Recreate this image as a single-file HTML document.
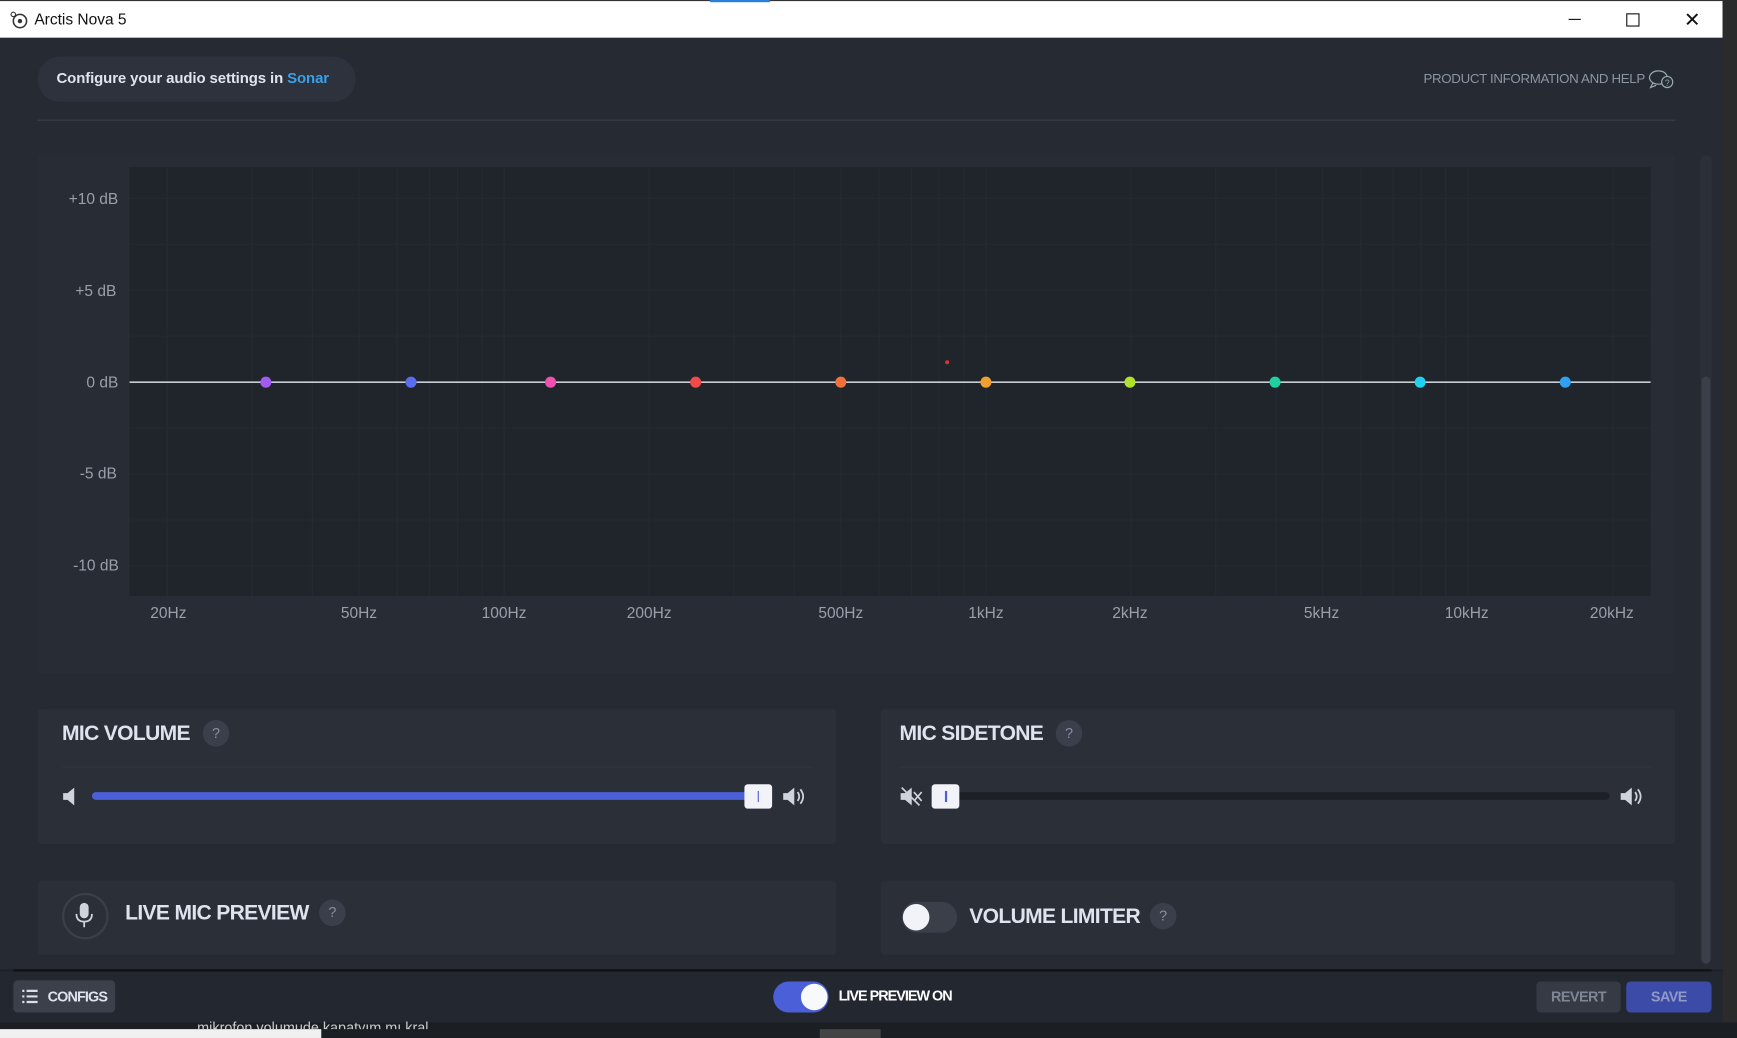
<!DOCTYPE html>
<html><head><meta charset="utf-8"><style>
html,body{margin:0;padding:0;width:1737px;height:1038px;overflow:hidden;background:#1f2227;font-family:"Liberation Sans",sans-serif}
#w{position:absolute;left:0;top:0;width:1568px;height:937px;transform:scale(1.10778);transform-origin:0 0;background:#1f2227}
.a{position:absolute}
.card{position:absolute;background:#2a2f38;border-radius:4px}
.t{position:absolute;color:#dfe3ee;font-size:19px;font-weight:bold;letter-spacing:-0.6px;white-space:nowrap}
.q{position:absolute;width:24px;height:24px;border-radius:12px;background:#3a3f4b;color:#8a8f9b;font-size:13px;text-align:center;line-height:24px}
.lbl{position:absolute;color:#9aa0aa;font-size:14px;white-space:nowrap}
</style></head><body><div id="w">
<div class="a" style="left:0;top:0;width:1555px;height:34px;background:#fff;border-top:1px solid #333"></div>
<div class="a" style="left:641px;top:0;width:54px;height:2px;background:#2a7fd6"></div>
<svg class="a" style="left:8px;top:9px" width="18" height="18" viewBox="0 0 18 18"><circle cx="10" cy="10" r="6" fill="none" stroke="#333" stroke-width="1.4"/><circle cx="10" cy="10" r="2" fill="#333"/><circle cx="4" cy="4" r="2" fill="none" stroke="#333"/></svg>
<div class="a" style="left:31px;top:9px;font-size:14px;color:#111">Arctis Nova 5</div>
<div class="a" style="left:1416px;top:17px;width:11px;height:1px;background:#111"></div>
<div class="a" style="left:1468px;top:12px;width:10px;height:10px;border:1px solid #111"></div>
<div class="a" style="left:1520px;top:8px;font-size:18px;color:#111">✕</div>
<div class="a" style="left:0;top:34px;width:1555px;height:841px;background:#252a33"></div>
<div class="a" style="left:1555px;top:0;width:13px;height:937px;background:#2b2b2b"></div>
<div class="a" style="left:34px;top:51px;width:287px;height:41px;border-radius:21px;background:#2d323c"></div>
<div class="a" style="left:51px;top:63px;font-size:13.5px;font-weight:bold;color:#dfe4ef;letter-spacing:-0.1px">Configure your audio settings in <span style="color:#3aa0e8">Sonar</span></div>
<div class="a" style="left:1285px;top:64px;font-size:12px;color:#8d95a3;letter-spacing:-0.3px">PRODUCT INFORMATION AND HELP</div>
<svg class="a" style="left:1488px;top:61px" width="26" height="22" viewBox="0 0 26 22"><path d="M9 3a8 6 0 1 0 0.1 0M4 14l-2 4 5-2" fill="none" stroke="#9aa" stroke-width="1.1"/><circle cx="17" cy="13" r="5" fill="#252a33" stroke="#9aa" stroke-width="1.1"/><text x="17" y="16.5" font-size="8" fill="#9aa" text-anchor="middle" font-family="Liberation Sans">?</text></svg>
<div class="a" style="left:34px;top:108px;width:1478px;height:1px;background:#3a404a"></div>
<div class="card" style="left:34px;top:140px;width:1478px;height:468px;background:#272c35"></div>
<svg class="a" id="eq" style="left:0;top:0" width="1568" height="620"></svg>
<div class="lbl" style="left:62px;top:171px">+10 dB</div>
<div class="lbl" style="left:68px;top:254px">+5 dB</div>
<div class="lbl" style="left:78px;top:337px">0 dB</div>
<div class="lbl" style="left:72px;top:419px">-5 dB</div>
<div class="lbl" style="left:66px;top:502px">-10 dB</div>
<div id="fl"></div>
<div class="card" style="left:34px;top:640px;width:721px;height:122px"></div>
<div class="t" style="left:56px;top:652px">MIC VOLUME</div><div class="q" style="left:183px;top:650px">?</div>
<div class="a" style="left:56px;top:692px;width:678px;height:1px;background:#30353f"></div>
<svg class="a" style="left:56px;top:710px" width="20" height="18" viewBox="0 0 20 18"><path d="M1 6h4l6-5v16l-6-5H1z" fill="#cfd3dc"/></svg>
<div class="a" style="left:83px;top:715px;width:600px;height:7px;border-radius:4px;background:#4b5fd8"></div>
<div class="a" style="left:672px;top:708px;width:25px;height:22px;border-radius:3px;background:#f1f3f8"><div style="position:absolute;left:12px;top:6px;width:1px;height:10px;background:#4b5fd8"></div></div>
<svg class="a" style="left:706px;top:710px" width="22" height="18" viewBox="0 0 22 18"><path d="M1 6h4l6-5v16l-6-5H1z" fill="#cfd3dc"/><path d="M14 5q3 4 0 8M16.5 2.5q5 6.5 0 13" fill="none" stroke="#cfd3dc" stroke-width="1.6"/></svg>
<div class="card" style="left:795px;top:640px;width:717px;height:122px"></div>
<div class="t" style="left:812px;top:652px">MIC SIDETONE</div><div class="q" style="left:953px;top:650px">?</div>
<div class="a" style="left:812px;top:692px;width:678px;height:1px;background:#30353f"></div>
<svg class="a" style="left:812px;top:710px" width="22" height="18" viewBox="0 0 22 18"><path d="M1 6h4l6-5v16l-6-5H1z" fill="#cfd3dc"/><path d="M13 5l7 8M20 5l-7 8M2 1l16 16" stroke="#cfd3dc" stroke-width="1.5"/></svg>
<div class="a" style="left:845px;top:715px;width:608px;height:7px;border-radius:4px;background:#1d2127"></div>
<div class="a" style="left:841px;top:708px;width:25px;height:22px;border-radius:3px;background:#f1f3f8"><div style="position:absolute;left:12px;top:6px;width:2px;height:10px;background:#4b5fd8"></div></div>
<svg class="a" style="left:1462px;top:710px" width="22" height="18" viewBox="0 0 22 18"><path d="M1 6h4l6-5v16l-6-5H1z" fill="#cfd3dc"/><path d="M14 5q3 4 0 8M16.5 2.5q5 6.5 0 13" fill="none" stroke="#cfd3dc" stroke-width="1.6"/></svg>
<div class="card" style="left:34px;top:795px;width:721px;height:67px"></div>
<div class="a" style="left:56px;top:806px;width:38px;height:38px;border-radius:21px;border:2px solid #3a3f49"></div>
<svg class="a" style="left:66px;top:814px" width="20" height="26" viewBox="0 0 20 26"><rect x="6" y="1" width="8" height="14" rx="4" fill="#cfd3dc"/><path d="M3 11q0 7 7 7t7-7M10 18v5" fill="none" stroke="#cfd3dc" stroke-width="1.6"/></svg>
<div class="t" style="left:113px;top:814px">LIVE MIC PREVIEW</div><div class="q" style="left:288px;top:812px">?</div>
<div class="card" style="left:795px;top:795px;width:717px;height:67px"></div>
<div class="a" style="left:814px;top:814px;width:50px;height:28px;border-radius:14px;background:#3a3f4a"></div>
<div class="a" style="left:815px;top:816px;width:24px;height:24px;border-radius:12px;background:#f1f3f8"></div>
<div class="t" style="left:875px;top:817px">VOLUME LIMITER</div><div class="q" style="left:1038px;top:815px">?</div>
<div class="a" style="left:1535px;top:140px;width:10px;height:730px;border-radius:5px;background:#2b3039"></div>
<div class="a" style="left:1536px;top:340px;width:8px;height:530px;border-radius:4px;background:#3a3f49"></div>
<div class="a" style="left:12px;top:875px;width:1533px;height:2px;background:#111"></div>
<div class="a" style="left:0;top:877px;width:1555px;height:46px;background:#232830"></div>
<div class="a" style="left:12px;top:885px;width:92px;height:29px;border-radius:4px;background:#3b404b"></div>
<svg class="a" style="left:20px;top:893px" width="14" height="13" viewBox="0 0 14 13"><path d="M0 1.5h2M4 1.5h10M0 6.5h2M4 6.5h10M0 11.5h2M4 11.5h10" stroke="#dde" stroke-width="2"/></svg>
<div class="a" style="left:43px;top:892px;font-size:13px;font-weight:bold;color:#dfe3ee;letter-spacing:-0.8px">CONFIGS</div>
<div class="a" style="left:698px;top:886px;width:50px;height:28px;border-radius:14px;background:#4b5fd8"></div>
<div class="a" style="left:723px;top:888px;width:24px;height:24px;border-radius:12px;background:#f8f9fc"></div>
<div class="a" style="left:757px;top:891px;font-size:13px;font-weight:bold;color:#fff;letter-spacing:-0.9px">LIVE PREVIEW ON</div>
<div class="a" style="left:1387px;top:886px;width:76px;height:28px;border-radius:4px;background:#353a45;color:#7f8794;font-size:13px;font-weight:bold;text-align:center;line-height:28px;letter-spacing:-0.5px">REVERT</div>
<div class="a" style="left:1468px;top:886px;width:77px;height:28px;border-radius:4px;background:#3c4aa8;color:#8f9ac8;font-size:13px;font-weight:bold;text-align:center;line-height:28px;letter-spacing:-0.5px">SAVE</div>
<div class="a" style="left:0;top:923px;width:1568px;height:14px;background:#1b1f24"></div>
<div class="a" style="left:0;top:929px;width:290px;height:8px;background:#f0f0f0"></div>
<div class="a" style="left:178px;top:920px;font-size:13px;color:#ccc;height:9px;overflow:hidden">mikrofon volumude kapatyım mı kral</div>
<div class="a" style="left:740px;top:929px;width:55px;height:8px;background:#444"></div>
</div>
<script>
var s='',x=f=>455+435*Math.log10(f/100);
s+='<rect x="117" y="151" width="1373" height="387" fill="#20252c"/>';
var fs=[20,30,40,50,60,70,80,90,100,200,300,400,500,600,700,800,900,1000,2000,3000,4000,5000,6000,7000,8000,9000,10000,20000];
fs.forEach(f=>{var X=x(f);s+='<line x1="'+X+'" y1="151" x2="'+X+'" y2="538" stroke="#262b33" stroke-width="1"/>';});
for(var d=-12.5;d<=12.5;d+=2.5){var Y=345-d*16.6;if(Y>151&&Y<538)s+='<line x1="117" y1="'+Y+'" x2="1490" y2="'+Y+'" stroke="#242930"/>';}
s+='<line x1="117" y1="345" x2="1490" y2="345" stroke="#c8ccd4" stroke-width="1.5"/>';
var dx=[240,371,497,628,759,890,1020,1151,1282,1413],dc=['#a35cf0','#5a6cf0','#f050b0','#f04a4a','#f0703a','#f0a030','#b0e030','#20d0a0','#20d0f0','#30a0f0'];
dx.forEach((X,i)=>s+='<circle cx="'+X+'" cy="345" r="5" fill="'+dc[i]+'"/>');
s+='<circle cx="855" cy="327" r="1.8" fill="#e03030"/>';
document.getElementById('eq').innerHTML=s;
var L=[['20Hz',152],['50Hz',324],['100Hz',455],['200Hz',586],['500Hz',759],['1kHz',890],['2kHz',1020],['5kHz',1193],['10kHz',1324],['20kHz',1455]],h='';
L.forEach(l=>h+='<div class="lbl" style="left:'+(l[1]-40)+'px;width:80px;text-align:center;top:545px">'+l[0]+'</div>');
document.getElementById('fl').innerHTML=h;
</script>
</body></html>
